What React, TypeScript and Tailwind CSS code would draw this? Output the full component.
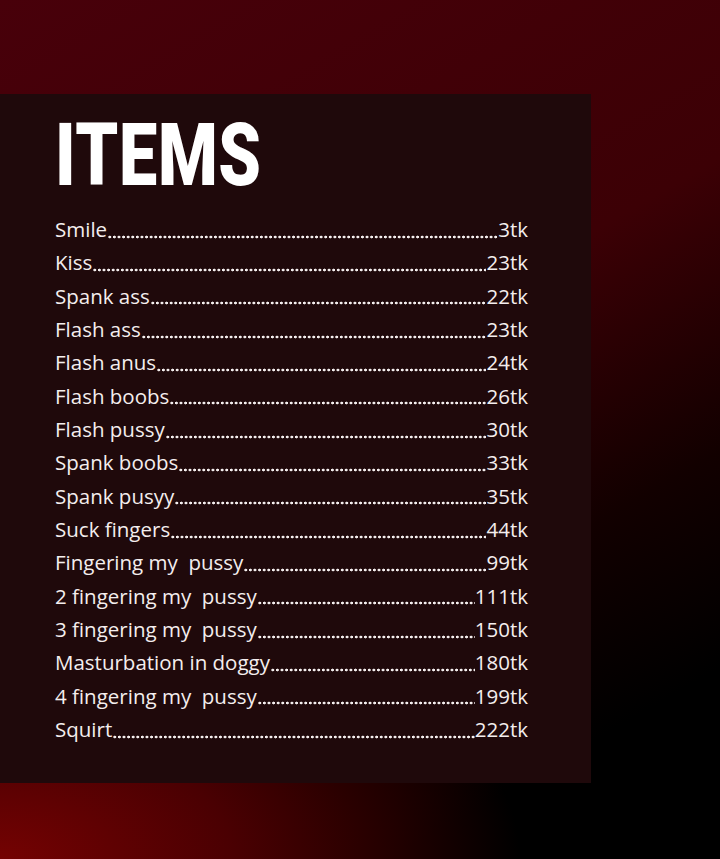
import React from 'react';

const items: [string, string][] = [
  ['Smile', '3tk'],
  ['Kiss', '23tk'],
  ['Spank ass', '22tk'],
  ['Flash ass', '23tk'],
  ['Flash anus', '24tk'],
  ['Flash boobs', '26tk'],
  ['Flash pussy', '30tk'],
  ['Spank boobs', '33tk'],
  ['Spank pusyy', '35tk'],
  ['Suck fingers', '44tk'],
  ['Fingering my  pussy', '99tk'],
  ['2 fingering my  pussy', '111tk'],
  ['3 fingering my  pussy', '150tk'],
  ['Masturbation in doggy', '180tk'],
  ['4 fingering my  pussy', '199tk'],
  ['Squirt', '222tk'],
];

const App: React.FC = () => {
  return (
    <div className="w-[720px] h-[859px] overflow-hidden bg-[radial-gradient(ellipse_520px_280px_at_0%_100%,#740202_0%,#4a0002_45%,#2a0000_70%,transparent_100%),linear-gradient(150deg,#48000a_0%,#3c0005_45%,#120000_68%,#000_85%)] pt-[94px]">
      {/* Menu panel */}
      <div className="w-[591px] h-[689px] bg-[#1f090b] pl-[55px] pt-[17px]">
        <h1
          className="text-white font-black text-[88px] leading-none origin-left scale-x-[0.775] tracking-[0.01em] mb-[14px]"
          style={{ fontFamily: 'Roboto, "Liberation Sans", sans-serif' }}
        >
          ITEMS
        </h1>

        <ul
          className="w-[473px] text-[#f4eeee] text-[20.5px] leading-[33.35px]"
          style={{ fontFamily: '"Open Sans", "Noto Sans", sans-serif' }}
        >
          {items.map(([name, price]) => (
            <li key={name} className="flex whitespace-pre">
              <span>{name}</span>
              {/* dot leader */}
              <span className="flex-1 bg-[radial-gradient(circle,#f4eeee_1.15px,transparent_1.7px)] bg-[length:4.6px_4px] bg-repeat-x bg-[position:0.5px_21.5px]" />
              <span>{price}</span>
            </li>
          ))}
        </ul>
      </div>
    </div>
  );
};

export default App;
